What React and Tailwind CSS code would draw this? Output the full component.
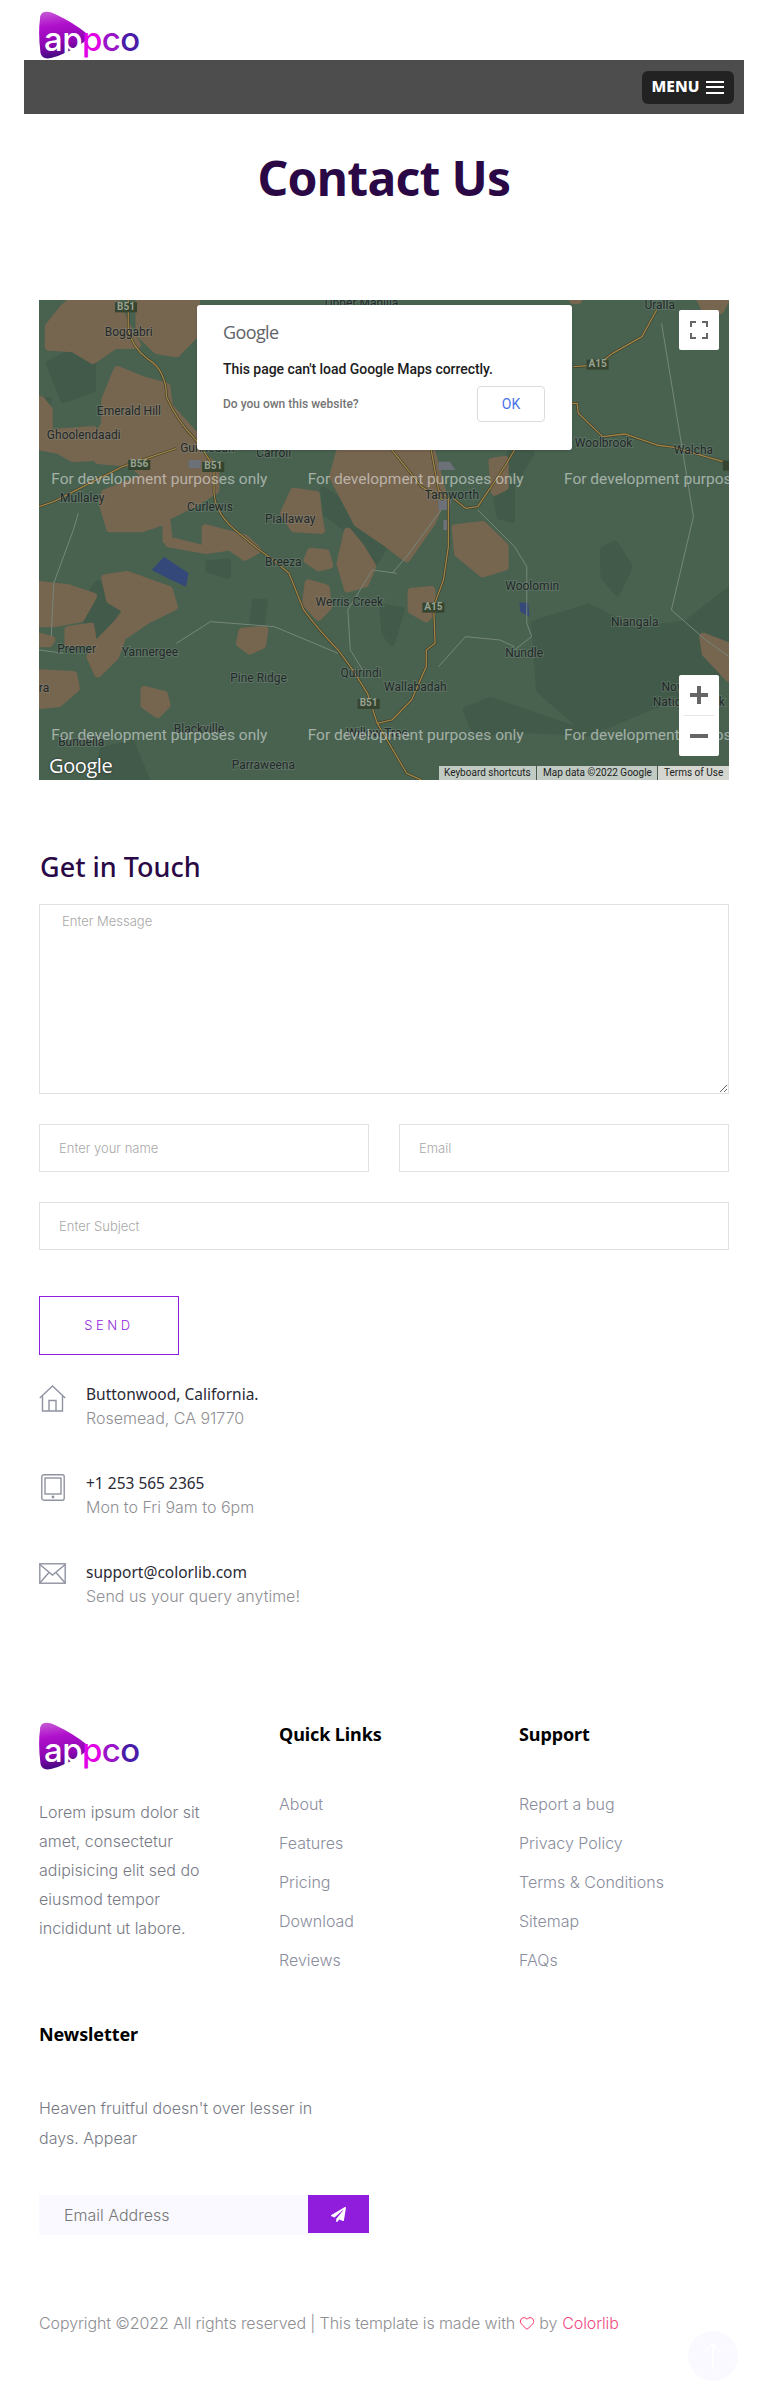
import { Heart } from "lucide-react";
import { FaPaperPlane } from "react-icons/fa";

const px = (zx) => zx / 2.04 - 39.2;
const py = (zy) => zy / 3 - 10;

const brown = [
  "M100 110 L130 55 L150 30 L235 30 L255 100 L280 165 L235 165 L190 210 L150 175 L100 170Z",
  "M285 30 L400 30 L400 130 L360 190 L320 180 L285 130Z",
  "M240 240 L290 270 L340 290 L345 350 L400 440 L405 490 L440 530 L440 600 L395 640 L340 680 L340 750 L420 780 L420 715 L500 745 L525 780 L500 800 L470 770 L420 780 L345 760 L340 690 L290 715 L225 715 L210 640 L215 610 L300 560 L270 520 L200 510 L190 470 L215 400 L215 330Z",
  "M84 330 L100 360 L100 430 L190 420 L200 500 L150 505 L120 480 L84 470Z",
  "M600 605 L645 615 L650 680 L655 720 L600 715 L580 670Z",
  "M695 480 L880 480 L905 620 L880 700 L830 805 L790 760 L730 700 L680 560Z",
  "M710 725 L735 770 L760 830 L745 880 L710 895 L695 820Z",
  "M635 785 L665 790 L672 825 L650 832 L628 810Z",
  "M930 715 L985 705 L1030 770 L1030 830 L985 850 L935 790Z",
  "M630 880 L665 895 L670 950 L650 980 L625 940Z",
  "M840 905 L880 900 L885 960 L870 985 L840 960Z",
  "M80 885 L140 895 L190 920 L165 985 L110 1000 L80 1000Z",
  "M215 865 L260 855 L345 900 L355 950 L300 990 L250 1040 L235 1100 L200 1150 L185 1100 L200 1060 L240 1000 L260 960 L225 930Z",
  "M140 1020 L185 1010 L190 1055 L140 1060Z",
  "M80 1040 L105 1050 L100 1060 L80 1060Z",
  "M495 1025 L540 1020 L535 1065 L510 1082 L490 1060Z",
  "M80 1150 L150 1155 L155 1195 L120 1240 L80 1245Z",
  "M295 1200 L335 1215 L340 1245 L322 1272 L295 1245Z",
  "M1435 1040 L1488 1070 L1488 1165 L1440 1090Z",
  "M1430 30 L1480 30 L1470 60 L1440 60Z",
  "M1005 515 L1030 510 L1030 590 L1010 605Z",
  "M1170 30 L1180 30 L1180 30Z",
];

const darkGreen = [
  "M660 600 L730 660 L790 760 L760 830 L720 730 L665 670Z",
  "M1090 1000 L1200 950 L1300 1020 L1400 1000 L1488 900 L1488 1100 L1440 1200 L1330 1250 L1200 1330 L1100 1200Z",
  "M165 950 L200 880 L250 915 L265 970 L230 1060 L195 1060Z",
  "M1230 780 L1255 760 L1285 830 L1260 910 L1232 860Z",
  "M1010 600 L1045 590 L1045 690 L1020 680Z",
  "M780 950 L820 960 L800 1060 L785 1030Z",
  "M950 1260 L1000 1230 L1200 1330 L1080 1320 L970 1330Z",
  "M210 1380 L270 1360 L300 1470 L200 1470Z",
  "M80 330 L100 330 L90 420 L80 420Z",
  "M1040 490 L1085 490 L1060 550 L1040 540Z",
  "M320 600 L350 600 L345 655 L315 650Z",
  "M425 820 L465 815 L465 858 L425 840Z",
  "M520 935 L540 935 L535 1000 L515 1000Z",
  "M155 180 L190 210 L190 300 L130 330 L100 220Z",
];

const mainRoads = [
  "M262 30 L262 120 Q270 170 300 205 Q340 240 340 320 Q360 390 400 450 L437 530 L437 610 Q440 670 480 720 L525 775 Q560 810 590 850 L620 960 Q650 1020 690 1080 L720 1140 L750 1210 L770 1300 L810 1400 L830 1450 L860 1470",
  "M1340 60 L1310 140 L1250 190 L1220 225 L1170 230",
  "M1166 340 L1178 340 L1180 370 L1230 440 L1275 432 L1340 465 L1375 472 L1440 500 L1488 520",
  "M880 480 L895 600 L915 625 L915 770 L905 870 L885 950 L888 1060 L870 1080 L870 1130 L840 1230 L800 1290 L770 1300",
  "M1050 480 L1030 530 L975 650 L950 655 L925 625",
  "M800 480 L860 590 L905 630",
  "M80 650 L110 635 L250 530 L360 475",
];

const minorRoads = [
  "M975 660 L1050 770 L1075 830 L1075 1000 L1085 1040 L1050 1080",
  "M1350 100 L1415 680 L1370 960 L1440 1050 L1488 1100",
  "M800 850 L830 800 L900 660",
  "M810 850 L760 840 L710 960 L715 1080 L740 1140",
  "M360 1060 L430 995 L560 1010 L690 1090",
  "M80 1080 L130 1090",
  "M895 1130 L950 1040 L1020 1050 L1050 1070",
  "M160 670 L150 720 L110 880 L105 1040",
];

const shields = [
  ["B51", 235, 37],
  ["A15", 1197, 209],
  ["B56", 262, 510],
  ["B51", 413, 516],
  ["A15", 862, 938],
  ["B51", 730, 1227],
  ["B", 1475, 512],
];

const places = [
  ["Upper Manilla", 663, 38],
  ["Uralla", 1315, 46],
  ["Boggabri", 214, 125],
  ["Emerald Hill", 198, 363],
  ["Ghoolendaadi", 96, 434],
  ["Gunnedah", 368, 475],
  ["Carroll", 523, 490],
  ["Woolbrook", 1173, 458],
  ["Walcha", 1375, 481],
  ["Mullaley", 123, 623],
  ["Curlewis", 382, 650],
  ["Tamworth", 867, 615],
  ["Piallaway", 541, 687],
  ["Breeza", 541, 817],
  ["Woolomin", 1031, 887],
  ["Werris Creek", 644, 935],
  ["Niangala", 1247, 997],
  ["Premer", 117, 1076],
  ["Yannergee", 249, 1086],
  ["Nundle", 1031, 1088],
  ["Quirindi", 695, 1150],
  ["Pine Ridge", 470, 1165],
  ["Wallabadah", 784, 1191],
  ["Gera", 50, 1194],
  ["Nowendoc", 1350, 1192],
  ["National Park", 1332, 1235],
  ["Blackville", 355, 1318],
  ["Willow Tree", 707, 1330],
  ["Bundella", 119, 1357],
  ["Parraweena", 473, 1426],
];

const devNotes = [
  [105, 568],
  [628, 568],
  [1151, 568],
  [105, 1336],
  [628, 1336],
  [1151, 1336],
];

const MapDrawing = () => (
  <svg viewBox="0 0 690 480" className="absolute inset-0 w-full h-full">
    <rect width="690" height="480" fill="#48624f" />
    <g transform="translate(-39.2 -10) scale(0.4902 0.3333)">
      {darkGreen.map((d, i) => (
        <path key={i} d={d} fill="#415a49" stroke="#415a49" strokeWidth="6" strokeLinejoin="round" vectorEffect="non-scaling-stroke" />
      ))}
      {brown.map((d, i) => (
        <path key={i} d={d} fill="#76654f" stroke="#76654f" strokeWidth="8" strokeLinejoin="round" vectorEffect="non-scaling-stroke" />
      ))}
      <path d="M335 800 L350 815 L385 850 L380 890 L350 870 L310 840Z" fill="#34487a" />
      <path d="M1060 938 L1078 938 L1080 980 L1062 965Z" fill="#34487a" />
      <path d="M895 515 L918 515 L930 540 L895 540Z M895 630 L920 630 L918 660 L895 660Z M385 510 L410 510 L410 535 L385 535Z M905 690 L915 690 L915 720 L905 720Z" fill="#6b7079" />
      {minorRoads.map((d, i) => (
        <path key={i} d={d} fill="none" stroke="#768679" strokeWidth="1" vectorEffect="non-scaling-stroke" />
      ))}
      {mainRoads.map((d, i) => (
        <path key={i} d={d} fill="none" stroke="#3a3a2c" strokeWidth="2.5" strokeLinejoin="round" vectorEffect="non-scaling-stroke" />
      ))}
      {mainRoads.map((d, i) => (
        <path key={i} d={d} fill="none" stroke="#a18545" strokeWidth="1.3" strokeLinejoin="round" vectorEffect="non-scaling-stroke" />
      ))}
      {shields.map(([name, x, y], i) => (
        <rect key={i} x={x} y={y} width="45" height="30" fill="#35452f" />
      ))}
    </g>
    {shields.map(([name, x, y], i) => (
      <text key={i} x={px(x + 22.5)} y={py(y + 22)} textAnchor="middle" fontFamily="Roboto" fontSize="10" fontWeight="700" fill="#98a292">
        {name}
      </text>
    ))}
    {places.map(([name, x, y], i) => (
      <text key={i} x={px(x)} y={py(y) + 4} fontFamily="Roboto" fontSize="12" fill="#23292a" stroke="#8f9a90" strokeOpacity="0.3" strokeWidth="2" paintOrder="stroke">
        {name}
      </text>
    ))}
    {devNotes.map(([x, y], i) => (
      <text key={i} x={px(x)} y={py(y) + 5} fontFamily="Roboto" fontSize="15.5" fill="#ffffff" fillOpacity="0.5">
        For development purposes only
      </text>
    ))}
  </svg>
);

const GoogleMap = () => (
  <div className="relative h-[480px] overflow-hidden font-['Roboto',sans-serif]">
    <MapDrawing />
    <div className="absolute left-[158px] top-[5px] w-[375px] h-[145px] bg-white rounded-[3px] shadow-sm pl-[26px] pr-[27px]">
      <p className="mt-[15px] text-[#5f6368] text-[18px] leading-[24px] tracking-[-0.6px] font-['Open_Sans',sans-serif]">Google</p>
      <p className="mt-[15px] text-[14px] leading-[20px] font-medium text-[#1c1c1c] tracking-[-0.05px]">This page can't load Google Maps correctly.</p>
      <div className="mt-[7px] flex items-center justify-between">
        <span className="text-[12px] font-medium text-[#757575]">Do you own this website?</span>
        <button className="w-[68px] h-[36px] border border-[#dadce0] rounded-[4px] text-[14px] text-[#4a73e8]">OK</button>
      </div>
    </div>
    <div className="absolute left-[640px] top-[10px] w-[40px] h-[40px] bg-white rounded-[2px] flex items-center justify-center">
      <svg width="18" height="18" viewBox="0 0 18 18" fill="none" stroke="#666" strokeWidth="2">
        <path d="M1 6V1h5M12 1h5v5M17 12v5h-5M6 17H1v-5" />
      </svg>
    </div>
    <div className="absolute left-[640px] top-[375px] w-[40px] h-[81px] bg-white rounded-[2px] flex flex-col items-center">
      <svg className="mt-[11px]" width="18" height="18" viewBox="0 0 18 18" fill="#666">
        <path d="M7 0h4v7h7v4h-7v7H7v-7H0V7h7z" />
      </svg>
      <div className="mt-[11px] w-[30px] h-px bg-[#e6e6e6]" />
      <div className="mt-[18px] w-[18px] h-[4px] bg-[#666]" />
    </div>
    <span className="absolute left-[10px] bottom-[1px] text-[20px] leading-[26px] font-medium text-white tracking-[-0.4px] font-['Open_Sans',sans-serif] [text-shadow:0_0_2px_#222]">Google</span>
    <div className="absolute right-0 bottom-0 w-[290px] h-[14px] flex text-[10px] leading-[14px] text-[#222]">
      <span className="w-[98px] pl-[5px] bg-[#c1cbc3] border-r border-[#4a5a4e]">Keyboard shortcuts</span>
      <span className="w-[121px] pl-[6px] bg-[#c1cbc3] border-r border-[#4a5a4e]">Map data ©2022 Google</span>
      <span className="flex-1 pl-[6px] bg-[#d5d6d0]">Terms of Use</span>
    </div>
  </div>
);

const Logo = () => (
  <div className="relative w-[100px] h-[48px]">
    <svg viewBox="0 0 100 48" className="absolute inset-0 w-[100px] h-[48px]">
      <defs>
        <linearGradient id="logoShape" x1="0.2" y1="0" x2="0.35" y2="1">
          <stop offset="0" stopColor="#c558d4" />
          <stop offset="0.3" stopColor="#b010cc" />
          <stop offset="0.7" stopColor="#8c05b0" />
          <stop offset="1" stopColor="#3c0c7c" />
        </linearGradient>
      </defs>
      <path d="M3 2 Q8 -1 16 3 Q35 12 47 22 Q50 26 45 31 Q28 43 12 47 Q3 49 1.5 42 Q-1 22 1 8 Q1 4 3 2Z" fill="url(#logoShape)" />
    </svg>
    <span className="absolute left-[5px] top-[10px] text-[33px] leading-[36px] font-medium tracking-[-0.6px] font-['Inter',sans-serif]">
      <span className="text-white">ap</span>
      <span className="text-[#e204e6]">p</span>
      <span className="text-[#9a14c8]">c</span>
      <span className="text-[#4a1ca8]">o</span>
    </span>
  </div>
);

const HomeIcon = () => (
  <svg width="27" height="27" viewBox="0 0 27 27" fill="none" stroke="#8f93a0" strokeWidth="1.4">
    <path d="M0.8 13 L13.5 1 L26.2 13" />
    <path d="M3.5 11v15h20V11" />
    <path d="M10 26V15.5h7V26" />
  </svg>
);

const TabletIcon = () => (
  <svg width="24" height="27" viewBox="0 0 24 27" fill="none" stroke="#8f93a0" strokeWidth="1.4">
    <rect x="0.8" y="0.8" width="22.4" height="25.4" rx="2" />
    <rect x="4" y="4" width="16" height="16" />
    <circle cx="12" cy="23" r="0.7" fill="#8f93a0" />
  </svg>
);

const MailIcon = () => (
  <svg width="27" height="21" viewBox="0 0 27 21" fill="none" stroke="#8f93a0" strokeWidth="1.4">
    <rect x="0.8" y="0.8" width="25.4" height="19.4" />
    <path d="M0.8 1.5 L13.5 12 L26.2 1.5" />
    <path d="M0.8 20 L10 9.5M26.2 20 L17 9.5" />
  </svg>
);

const contacts = [
  { icon: <HomeIcon />, title: "Buttonwood, California.", sub: "Rosemead, CA 91770" },
  { icon: <TabletIcon />, title: "+1 253 565 2365", sub: "Mon to Fri 9am to 6pm" },
  { icon: <MailIcon />, title: "support@colorlib.com", sub: "Send us your query anytime!" },
];

const quickLinks = ["About", "Features", "Pricing", "Download", "Reviews"];
const supportLinks = ["Report a bug", "Privacy Policy", "Terms & Conditions", "Sitemap", "FAQs"];

const inputClass =
  "w-full h-[48px] border border-[#e2e2e2] px-[19px] text-[13px] outline-none placeholder:text-[#a8a8a8] font-['Inter',sans-serif] font-light";

const LinkColumn = ({ title, links }) => (
  <div>
    <h4 className="text-[18px] leading-[24px] font-bold text-black tracking-[-0.1px] font-['Noto_Sans',sans-serif]">{title}</h4>
    <ul className="mt-[39px]">
      {links.map((link) => (
        <li key={link} className="h-[39px] leading-[39px] text-[16px] font-light text-[#8a8d9c]">
          {link}
        </li>
      ))}
    </ul>
  </div>
);

const App = () => {
  return (
    <div className="relative w-[768px] h-[2399px] bg-white font-['Inter',sans-serif] overflow-hidden">
      <header>
        <div className="h-[60px] pl-[39px] pt-[11px]">
          <Logo />
        </div>
        <div className="mx-[24px] h-[54px] bg-[#4d4d4d] flex items-center justify-end pr-[10px]">
          <button className="w-[92px] h-[33px] rounded-[6px] bg-[#222222] flex items-center justify-center gap-[7px] text-white text-[15.5px] font-extrabold font-['Noto_Sans',sans-serif]">
            MENU
            <span className="flex flex-col gap-[3.5px]">
              <span className="block w-[18px] h-[2px] bg-white" />
              <span className="block w-[18px] h-[2px] bg-white" />
              <span className="block w-[18px] h-[2px] bg-white" />
            </span>
          </button>
        </div>
      </header>

      <h1 className="mt-[32px] text-center text-[48px] leading-[64px] font-bold text-[#2a0845] tracking-[-0.7px] font-['Noto_Sans',sans-serif]">
        Contact Us
      </h1>

      <main className="px-[39px] mt-[90px]">
        <GoogleMap />

        <h2 className="mt-[67px] pl-px text-[27px] leading-[40px] font-medium text-[#2a0845] font-['Noto_Sans',sans-serif]">Get in Touch</h2>
        <textarea
          className="mt-[17px] block w-full h-[190px] border border-[#e2e2e2] pl-[22px] pt-[6px] text-[13px] leading-[20px] outline-none placeholder:text-[#a8a8a8] font-light"
          placeholder="Enter Message"
        />
        <div className="mt-[30px] grid grid-cols-2 gap-[30px]">
          <input className={inputClass} placeholder="Enter your name" />
          <input className={inputClass} placeholder="Email" />
        </div>
        <input className={`${inputClass} mt-[30px] block`} placeholder="Enter Subject" />

        <button className="mt-[46px] w-[140px] h-[59px] border border-[#8f1ddb] text-[#8f1ddb] text-[13px] tracking-[3.6px] font-light">SEND</button>

        <div className="mt-[27px] flex flex-col gap-[41px]">
          {contacts.map((item) => (
            <div key={item.title} className="flex h-[48px]">
              <div className="w-[47px] pt-[3px] flex justify-center pr-[20px]">{item.icon}</div>
              <div>
                <p className="text-[15.5px] leading-[24px] text-[#2a2a35] font-['Noto_Sans',sans-serif]">{item.title}</p>
                <p className="text-[16px] leading-[24px] text-[#8f8f93] font-light">{item.sub}</p>
              </div>
            </div>
          ))}
        </div>
      </main>

      <footer className="px-[39px] mt-[114px]">
        <div className="grid grid-cols-[240px_240px_1fr]">
          <div>
            <Logo />
            <p className="mt-[28px] text-[16px] leading-[29px] text-[#777a85] font-light">
              Lorem ipsum dolor sit
              <br />
              amet, consectetur
              <br />
              adipisicing elit sed do
              <br />
              eiusmod tempor
              <br />
              incididunt ut labore.
            </p>
          </div>
          <LinkColumn title="Quick Links" links={quickLinks} />
          <LinkColumn title="Support" links={supportLinks} />
        </div>

        <h4 className="mt-[42px] text-[18px] leading-[24px] font-bold text-black tracking-[-0.1px] font-['Noto_Sans',sans-serif]">Newsletter</h4>
        <p className="mt-[47px] text-[16px] leading-[30px] text-[#777a85] font-light">
          Heaven fruitful doesn't over lesser in
          <br />
          days. Appear
        </p>
        <div className="mt-[42px] relative w-[330px] h-[40px] bg-[#f9f9ff] pl-[25px] flex items-center text-[16px] text-[#777777] font-light">
          Email Address
          <button className="absolute right-0 top-0 w-[61px] h-[38px] bg-[#8f1ddb] flex items-center justify-center">
            <FaPaperPlane className="text-white" size={15} />
          </button>
        </div>
        <p className="mt-[76px] text-[16px] leading-[24px] text-[#8f8f93] font-light tracking-[-0.1px] flex items-center">
          Copyright ©2022 All rights reserved | This template is made with
          <Heart className="mx-[4px] text-[#ff3368]" size={16} strokeWidth={1.5} />
          by <span className="ml-[5px] text-[#f1487f]">Colorlib</span>
        </p>
      </footer>

      <div className="absolute left-[688px] top-[2331px] w-[50px] h-[50px] rounded-full bg-[#f9f9ff] flex items-center justify-center">
        <svg width="18" height="26" viewBox="0 0 18 26" fill="none" stroke="#ffffff" strokeWidth="1.5">
          <path d="M9 26V1M1 9l8-8 8 8" />
        </svg>
      </div>
    </div>
  );
};

export default App;
